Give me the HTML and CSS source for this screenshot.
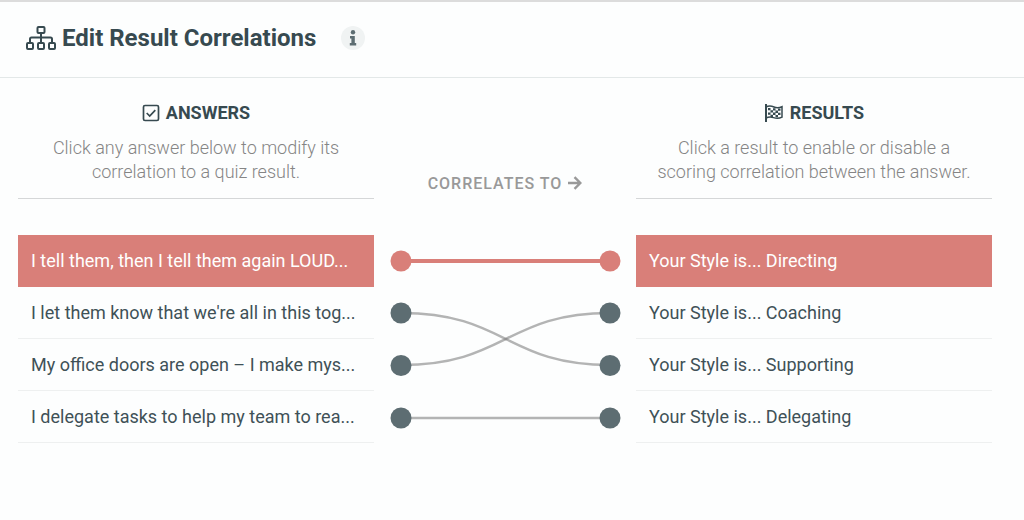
FILE: index.html
```html
<!DOCTYPE html>
<html lang="en">
<head>
  <meta charset="UTF-8" />
  <meta name="viewport" content="width=device-width, initial-scale=1.0" />
  <title>Edit Result Correlations</title>
  <link rel="stylesheet" href="styles.css">
</head>
<body>
  <header class="page-header">
    <svg class="icon-sitemap" width="30" height="26" viewBox="0 0 30 26" aria-hidden="true">
      <g fill="none" stroke="currentColor" stroke-width="2">
        <rect x="11.5" y="2" width="7" height="6" rx="1" />
        <rect x="1" y="18" width="6" height="6" rx="1" />
        <rect x="12" y="18" width="6" height="6" rx="1" />
        <rect x="23" y="18" width="6" height="6" rx="1" />
        <path d="M15 8v10M4 18v-4q0-1.500 1.500-1.500h19q1.500 0 1.500 1.500v4" />
      </g>
    </svg>
    <h1>Edit Result Correlations</h1>
    <button class="info" type="button" aria-label="Info">
      <svg width="8" height="16" viewBox="0 0 8 16" aria-hidden="true">
        <circle cx="4" cy="2.200" r="2.200" fill="currentColor" />
        <path d="M1 6h4.800v7H7.200v2.500H.8V13h1.600V8.500H1z" fill="currentColor" />
      </svg>
    </button>
  </header>

  <main class="correlations">
    <section class="intro">
      <h2>
        <svg width="18" height="18" viewBox="0 0 18 18" aria-hidden="true">
          <rect x="1.500" y="1.500" width="15" height="15" rx="1.500" fill="none" stroke="currentColor" stroke-width="1.700" />
          <path d="M4.700 9l3 3 5.600-5.800" fill="none" stroke="currentColor" stroke-width="1.700" />
        </svg>
        ANSWERS
      </h2>
      <p>Click any answer below to modify its<br>correlation to a quiz result.</p>
    </section>

    <div class="direction">
      CORRELATES TO
      <svg width="14" height="14" viewBox="0 0 14 14" aria-hidden="true">
        <path d="M0 7h12M6.500 1.200L12.400 7l-5.900 5.800" fill="none" stroke="currentColor" stroke-width="2.400" />
      </svg>
    </div>

    <section class="intro">
      <h2>
        <svg width="20" height="20" viewBox="0 0 20 20" aria-hidden="true">
          <path d="M2 1v18" stroke="currentColor" stroke-width="2" />
          <path d="M2 4c3-1.500 5-1.200 8 0s5 1 8-.3v10.500c-3 1.500-5.500 1.500-8.500.4S5 13.500 2 15" fill="none" stroke="currentColor" stroke-width="1.500" />
          <path d="M4 5h2.500v2.300H4zM9 5.300h2.500v2.300H9zM14 5.600h2.500v2.200H14zM6.500 7.300H9v2.300H6.500zM11.500 7.600H14v2.300h-2.500zM4 9.600h2.500v2.200H4zM9 9.600h2.500v2.300H9zM14 9.800h2.500V12H14zM6.500 11.800H9V14H6.500zM11.500 11.900H14v2.300h-2.500z" fill="currentColor" />
        </svg>
        RESULTS
      </h2>
      <p>Click a result to enable or disable a<br>scoring correlation between the answer.</p>
    </section>

    <div class="options">
      <button class="option active" type="button">I tell them, then I tell them again LOUD...</button>
      <button class="option" type="button">I let them know that we're all in this tog...</button>
      <button class="option" type="button">My office doors are open – I make mys...</button>
      <button class="option" type="button">I delegate tasks to help my team to rea...</button>
    </div>

    <svg class="links" viewBox="0 0 262 208" aria-hidden="true">
      <g class="lines">
        <path class="link-active" d="M27 26H236" />
        <path d="M27 78C132 78 132 130 236 130" />
        <path d="M27 130C132 130 132 78 236 78" />
        <path d="M27 183H236" />
      </g>
      <g class="dots">
        <circle class="dot-active" cx="27" cy="26" r="10.500" />
        <circle class="dot-active" cx="236" cy="26" r="10.500" />
        <circle cx="27" cy="78" r="10.500" />
        <circle cx="236" cy="78" r="10.500" />
        <circle cx="27" cy="130.500" r="10.500" />
        <circle cx="236" cy="130.500" r="10.500" />
        <circle cx="27" cy="183" r="10.500" />
        <circle cx="236" cy="183" r="10.500" />
      </g>
    </svg>

    <div class="options">
      <button class="option active" type="button">Your Style is... Directing</button>
      <button class="option" type="button">Your Style is... Coaching</button>
      <button class="option" type="button">Your Style is... Supporting</button>
      <button class="option" type="button">Your Style is... Delegating</button>
    </div>
  </main>
</body>
</html>
```

FILE: styles.css
```css
* { box-sizing: border-box; }
body { margin: 0; font-family: Roboto, "Liberation Sans", sans-serif; background: #fdfefe; color: #374a50; }
h1, h2, p { margin: 0; }
button { font-family: inherit; border: none; cursor: pointer; }

.page-header { display: flex; align-items: center; height: 78px; padding: 0 26px 4px; border-top: 2px solid #dcdcdc; border-bottom: 1px solid #e3e8e8; }
.icon-sitemap { margin-right: 6px; }
h1 { font-size: 24px; line-height: 28px; font-weight: 700; }
.info { display: flex; align-items: center; justify-content: center; width: 24px; height: 24px; margin-left: 25px; padding: 0; border-radius: 50%; background: #f0f3f3; color: #5d6d72; }

.correlations { display: grid; grid-template-columns: 1fr 262px 1fr; padding: 23px 32px 0 18px; }
.intro { height: 98px; margin-bottom: 36px; border-bottom: 1px solid #d5d7d8; text-align: center; }
.intro h2 { display: flex; align-items: center; justify-content: center; gap: 6px; font-size: 18px; line-height: 24px; font-weight: 700; }
.intro p { margin-top: 11px; font-size: 18px; line-height: 24px; font-weight: 300; color: #858585; }
.direction { display: flex; align-items: center; justify-content: center; gap: 6px; height: 24px; margin-top: 70px; font-size: 16px; font-weight: 500; letter-spacing: 1px; color: #999; }

.options { min-width: 0; }
.option { display: block; width: 100%; height: 52px; padding: 0 13px; border-bottom: 1px solid #eef0f0; background: transparent; color: #3f5157; font-size: 18px; text-align: left; white-space: nowrap; overflow: hidden; text-overflow: ellipsis; }
.option.active { background: #d97f79; color: #fff; border-bottom-color: #d97f79; }

.links { display: block; width: 100%; }
.lines { fill: none; stroke: #777; stroke-opacity: 0.55; stroke-width: 2.5; }
.lines .link-active { stroke: #d97f79; stroke-opacity: 1; stroke-width: 4; }
.dots { fill: #5d6d72; }
.dots .dot-active { fill: #d97f79; }
```
